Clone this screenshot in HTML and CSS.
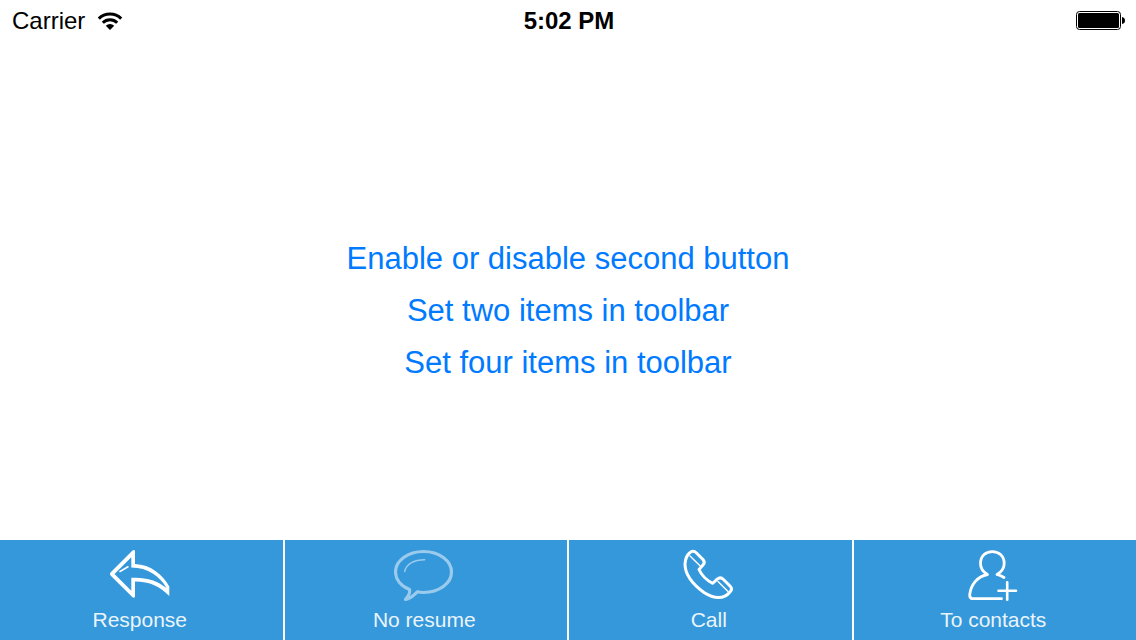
FILE: index.html
```html
<!DOCTYPE html>
<html lang="en">
<head>
<meta charset="utf-8">
<meta name="viewport" content="width=device-width, initial-scale=1">
<title>Toolbar demo</title>
<link rel="stylesheet" href="styles.css">
</head>
<body>
<header class="status">
  <div class="status-left">
    <span>Carrier</span>
    <svg class="wifi" viewBox="0 0 26 20" aria-hidden="true">
      <path d="M1.8 7.6A15.8 15.8 0 0 1 24.2 7.6" fill="none" stroke="#000" stroke-width="3"/>
      <path d="M5.8 11.7A10.2 10.2 0 0 1 20.2 11.7" fill="none" stroke="#000" stroke-width="3"/>
      <path d="M13 19L8.8 14.8A6 6 0 0 1 17.2 14.8Z"/>
    </svg>
  </div>
  <time class="clock">5:02 PM</time>
  <div class="status-right">
    <svg class="battery" viewBox="0 0 50 20" aria-hidden="true">
      <rect x="0.5" y="0.5" width="44" height="18" rx="3" fill="#fff" stroke="#000"/>
      <rect x="2" y="2" width="41" height="15" rx="1.5"/>
      <path d="M46 6q3 .5 3 3.500t-3 3.500z"/>
    </svg>
  </div>
</header>
<main class="actions">
  <button class="action" type="button">Enable or disable second button</button>
  <button class="action" type="button">Set two items in toolbar</button>
  <button class="action" type="button">Set four items in toolbar</button>
</main>
<nav class="toolbar" aria-label="Toolbar">
  <button class="item" type="button">
    <svg class="icon" viewBox="0 0 60 56" aria-hidden="true">
      <path fill="#fff" stroke="none" fill-rule="evenodd" d="M0 26Q0 25 1 24L22.500 2.500Q24.800 1.200 25 3.500V16C41 16.500 53 27 59.300 38.500V48C50 38.500 40 33.500 25 33.500V48.500Q24.500 50.500 22.500 49.300L1 28Q0 27 0 26ZM4.500 26L21.300 42.800V29.800C36 29 47 32.500 56.500 40C50 28.500 38 19.500 21.300 19.500V9.200Z"/>
      <path stroke-width="1.600" d="M10 23.500L18 18.800"/>
    </svg>
    <span>Response</span>
  </button>
  <button class="item item-off" type="button">
    <svg class="icon" viewBox="0 0 60 56" aria-hidden="true">
      <path stroke-width="3.200" d="M15.500 41.500C7 38 1.500 31.500 1.500 24C1.500 12.500 14 3.500 29.500 3.500S57.500 12.500 57.500 24S45 44.500 29.500 44.500Q26 44.500 23.500 43.800C20 46.500 17 51 11.500 51.300Q16.500 46 15.500 41.500Z"/>
      <path stroke-width="1.400" d="M10.700 23.500C12 16 20 11.700 30.700 11.700"/>
    </svg>
    <span>No resume</span>
  </button>
  <button class="item" type="button">
    <svg class="icon" viewBox="0 0 60 56" aria-hidden="true">
      <path stroke-width="3" d="M10.500 5Q14 1.500 17.500 5L24 11.500Q26.500 14.500 24 17L20 21.500Q24 30.500 33.800 35.300L38 31.200Q41.500 28.500 44.500 31.500L51 38Q54 41 51 44C45 51.500 35 51 25 44.500C14 36.500 6 27 6 16Q6.500 8.500 10.500 5Z"/>
      <path stroke-width="1.400" d="M11 8L22 18.700M39 33.500L49 43.500"/>
    </svg>
    <span>Call</span>
  </button>
  <button class="item" type="button">
    <svg class="icon" viewBox="0 0 60 56" aria-hidden="true">
      <path stroke-width="2.800" d="M38.500 50.700H9.500Q6.500 50.500 6.700 46.500C8 37 14 28.500 24.500 26.500C20 24 17.500 20 17.500 15.500C17.500 8 22.500 3.600 29.300 3.600S41.200 8 41.200 15.500C41.200 20 38.500 24 34 26.500Q38 27.500 41 29.500"/>
      <path stroke-width="2.600" d="M35.500 42.700H53M44.200 34.300V51.700"/>
    </svg>
    <span>To contacts</span>
  </button>
</nav>
</body>
</html>
```
FILE: styles.css
```css
* {
  box-sizing: border-box;
}

body {
  margin: 0;
  min-height: 100vh;
  display: flex;
  flex-direction: column;
  background: #fff;
  color: #000;
  font-family: "Liberation Sans", Arial, sans-serif;
}

button {
  margin: 0;
  border: 0;
  background: none;
  font-family: inherit;
  cursor: pointer;
}

.status {
  display: grid;
  grid-template-columns: 1fr auto 1fr;
  align-items: center;
  height: 40px;
  padding: 2px 10px 0 12px;
  font-size: 24px;
}

.status-left {
  display: flex;
  align-items: center;
  gap: 12px;
}

.wifi {
  width: 26px;
  height: 20px;
}

.clock {
  font-weight: bold;
}

.status-right {
  display: flex;
  justify-content: flex-end;
}

.battery {
  width: 50px;
  height: 20px;
}

.actions {
  flex: 1;
  display: flex;
  flex-direction: column;
  align-items: center;
  justify-content: center;
  padding-top: 42px;
}

.action {
  padding: 0 8px;
  color: #007aff;
  font-size: 31px;
  line-height: 52px;
}

.toolbar {
  display: grid;
  grid-template-columns: repeat(4, 1fr);
  gap: 2px;
}

.item {
  display: flex;
  flex-direction: column;
  align-items: center;
  padding: 8px 3px 4px 0;
  background: #3498db;
  color: #fff;
  font-size: 21px;
  line-height: 32px;
}

.item span {
  opacity: 0.9;
}

.icon {
  width: 60px;
  height: 56px;
  fill: none;
  stroke: #fff;
  stroke-linecap: round;
  stroke-linejoin: round;
}

.item-off .icon {
  opacity: 0.5;
}
```
